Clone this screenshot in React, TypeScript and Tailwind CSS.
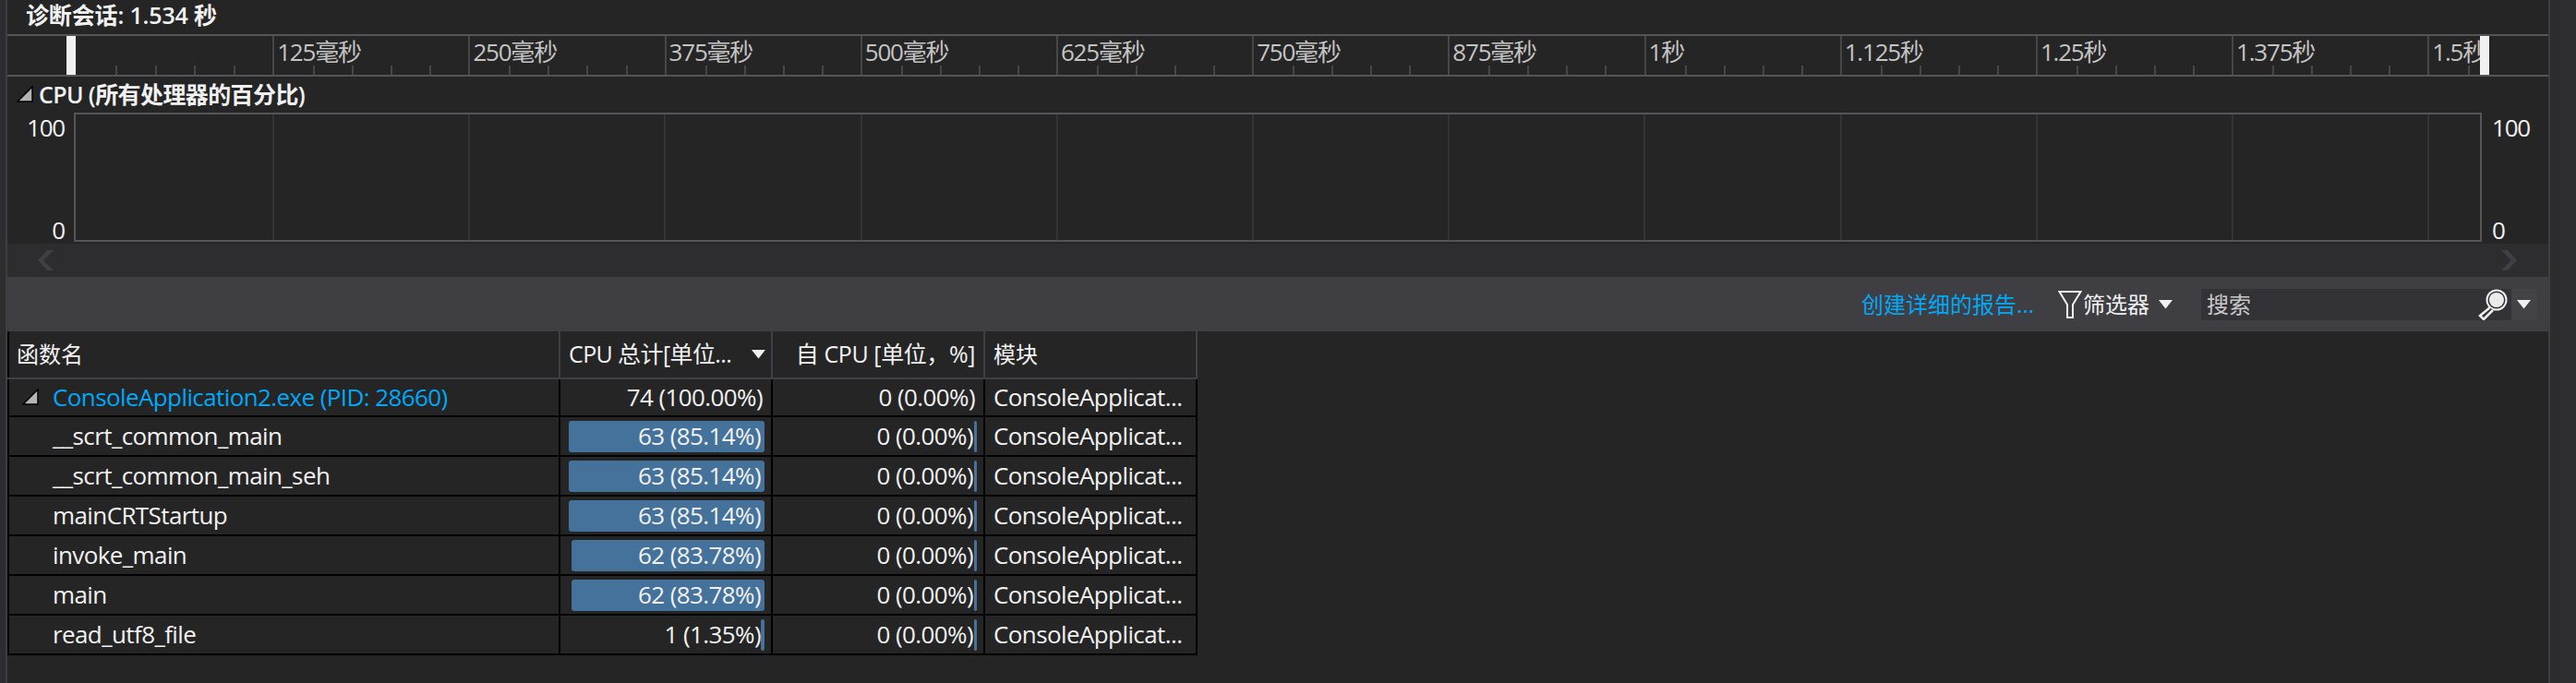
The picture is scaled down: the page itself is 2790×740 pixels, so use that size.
const font = '"Open Sans","Noto Sans CJK SC",sans-serif';

const labels = ['', '125毫秒', '250毫秒', '375毫秒', '500毫秒', '625毫秒', '750毫秒', '875毫秒', '1秒', '1.125秒', '1.25秒', '1.375秒', '1.5秒'];

function Tri({ className = '' }: { className?: string }) {
  return (
    <svg width="19" height="19" viewBox="0 0 19 19" className={className}>
      <polygon points="17,1 17,17 1,17" fill="#b4b4b4" stroke="#000" strokeWidth="1.5" />
    </svg>
  );
}

function Caret({ className = '' }: { className?: string }) {
  return (
    <svg width="15" height="10" viewBox="0 0 15 10" className={className}>
      <polygon points="0,0 15,0 7.5,9.5" fill="#f1f1f1" />
    </svg>
  );
}

function Ruler() {
  return (
    <div className="relative h-[46px] overflow-hidden border-y-2 border-[#555557]">
      <div className="flex h-full w-[2678px] overflow-hidden pl-[75px]">
        {labels.map((l, i) => (
          <div key={i} className={`relative flex h-full w-[212.2px] shrink-0 flex-col justify-between ${i > 0 ? 'border-l-2 border-[#47474a]' : ''}`}>
            <div className="h-[30px] pl-[3px] text-[26px] leading-[34px] tracking-[-1.2px] whitespace-nowrap text-[#c4c4c4]">{l}</div>
            <div className="grid h-[10px] grid-cols-5">
              <div />
              <div className="border-l-2 border-[#47474a]" />
              <div className="border-l-2 border-[#47474a]" />
              <div className="border-l-2 border-[#47474a]" />
              <div className="border-l-2 border-[#47474a]" />
            </div>
          </div>
        ))}
      </div>
      <div className="absolute top-0 bottom-0 left-[64px] w-[10px] bg-[#f1f1f1]" />
      <div className="absolute top-0 bottom-0 left-[2678px] w-[10px] bg-[#f1f1f1]" />
    </div>
  );
}

function Chart() {
  const lines = labels.slice(1);
  return (
    <div className="flex h-[140px]">
      <div className="flex w-[72px] shrink-0 flex-col justify-between pr-[10px] text-right text-[26px] leading-[32px] tracking-[-1.2px] text-[#f1f1f1]">
        <div>100</div>
        <div className="mb-[-3px]">0</div>
      </div>
      <div className="flex h-full w-[2608px] shrink-0 overflow-hidden border-2 border-[#555557] pl-[213px]">
        {lines.map((_, i) => (
          <div key={i} className="h-full w-[212.2px] shrink-0 border-l-2 border-[#333336]" />
        ))}
      </div>
      <div className="flex flex-col justify-between pl-[11px] text-[26px] leading-[32px] tracking-[-1.2px] text-[#f1f1f1]">
        <div>100</div>
        <div className="mb-[-3px]">0</div>
      </div>
    </div>
  );
}

type Row = { name: string; total: string; bar: number };
const rows: Row[] = [
  { name: '__scrt_common_main', total: '63 (85.14%)', bar: 212 },
  { name: '__scrt_common_main_seh', total: '63 (85.14%)', bar: 212 },
  { name: 'mainCRTStartup', total: '63 (85.14%)', bar: 212 },
  { name: 'invoke_main', total: '62 (83.78%)', bar: 209 },
  { name: 'main', total: '62 (83.78%)', bar: 209 },
  { name: 'read_utf8_file', total: '1 (1.35%)', bar: 4 },
];

function Num({ value, bar, pr }: { value: string; bar: number; pr: string }) {
  return (
    <div className={`relative flex h-full items-center justify-end ${pr}`}>
      {bar > 0 && (
        <div className="absolute top-[4px] right-[7px] bottom-[3px] rounded-[3px] bg-[#44729a]" style={{ width: bar }} />
      )}
      <span className="relative">{value}</span>
    </div>
  );
}

function Cells({ name, total, self, bar, selfBar, blue, expander }: { name: string; total: string; self: string; bar: number; selfBar: boolean; blue?: boolean; expander?: boolean }) {
  return (
    <div className={`flex w-[1289px] border-b-2 border-black text-[26px] tracking-[-0.6px] text-[#f1f1f1] ${expander ? 'h-[41px]' : 'h-[43px]'}`}>
      <div className={`flex w-[599px] items-center border-x-2 border-black pl-[14px] ${blue ? 'text-[#00a8f8]' : ''}`}>
        <div className="w-[33px] shrink-0">{expander && <Tri />}</div>
        <span className="whitespace-nowrap">{name}</span>
      </div>
      <div className="w-[230px] border-r-2 border-black">
        <Num value={total} bar={bar} pr={bar ? 'pr-[11px]' : 'pr-[9px]'} />
      </div>
      <div className="w-[230px] border-r-2 border-black">
        <Num value={self} bar={selfBar ? 3 : 0} pr={selfBar ? 'pr-[11px]' : 'pr-[9px]'} />
      </div>
      <div className="flex w-[230px] items-center border-r-2 border-black pl-[9px] whitespace-nowrap">
        <span>ConsoleApplicat...</span>
      </div>
    </div>
  );
}

export default function App() {
  return (
    <div className="flex h-[740px] w-[2790px] overflow-hidden bg-[#2d2d30]" style={{ fontFamily: font }}>
      <div className="w-[8px] shrink-0 border-r-2 border-[#3e3e42] bg-[#2d2d30]" />
      <div className="flex w-[2752px] shrink-0 flex-col bg-[#252526]">
        <div className="h-[37px] pl-[20px] text-[25px] leading-[32px] font-semibold tracking-[-0.15px] text-[#f1f1f1]">诊断会话: 1.534 秒</div>
        <Ruler />
        <div className="flex h-[39px] items-center gap-[5px] pl-[10px] text-[25px] font-semibold tracking-[-0.6px] text-[#f1f1f1]">
          <Tri />
          <span>CPU (所有处理器的百分比)</span>
        </div>
        <Chart />
        <div className="h-[2px]" />
        <div className="flex h-[36px] items-center justify-between bg-[#2d2d30] pr-[34px] pl-[33px]">
          <svg width="20" height="24" viewBox="0 0 20 24"><path d="M17 1 L6 12 L17 23 H10 L0 12 L10 1 Z" fill="#3f3f46" /></svg>
          <svg width="20" height="24" viewBox="0 0 20 24"><path d="M3 1 L14 12 L3 23 H10 L20 12 L10 1 Z" fill="#3f3f46" /></svg>
        </div>
        <div className="flex h-[59px] items-center justify-end bg-[#3f3f43] pr-[12px] text-[24px] text-[#f1f1f1]">
          <span className="text-[#00a8f8]">创建详细的报告...</span>
          <svg width="26" height="34" viewBox="0 0 26 34" className="ml-[26px]">
            <path d="M1.5 3 H24.5 L16 17 V31 H10 V17 Z" fill="none" stroke="#f1f1f1" strokeWidth="2" />
          </svg>
          <span className="ml-[1px]">筛选器</span>
          <Caret className="ml-[10px]" />
          <div className="ml-[31px] flex h-[34px] w-[336px] items-center justify-between bg-[#333337] pr-[4px] pl-[6px] text-[#c8c8c8]">
            <span>搜索</span>
            <svg width="32" height="34" viewBox="0 0 32 34">
              <circle cx="20" cy="12" r="10.5" fill="#333337" stroke="#f1f1f1" strokeWidth="2" />
              <circle cx="20" cy="12" r="8" fill="#ececec" />
              <path d="M13 20 L2 29 L6 33 L16 23" fill="#333337" stroke="#f1f1f1" strokeWidth="2.5" />
            </svg>
          </div>
          <div className="flex h-[34px] w-[28px] items-center bg-[#434347] pl-[6px]">
            <Caret />
          </div>
        </div>

        <div className="flex h-[52px] w-[1289px] border-b-2 border-[#3f3f46] text-[25px] text-[#f1f1f1]">
          <div className="flex w-[599px] items-center border-r-2 border-l-2 border-r-[#3f3f46] border-l-black pl-[8px] text-[24px]">函数名</div>
          <div className="flex w-[230px] items-center justify-between border-r-2 border-[#3f3f46] pr-[6px] pl-[9px]">
            <span className="tracking-[-0.6px] whitespace-nowrap">CPU 总计[单位...</span>
            <Caret />
          </div>
          <div className="flex w-[230px] items-center justify-end border-r-2 border-[#3f3f46] pr-[9px] tracking-[-0.4px] whitespace-nowrap">自 CPU [单位，%]</div>
          <div className="flex w-[230px] items-center border-r-2 border-[#3f3f46] pl-[9px] text-[24px]">模块</div>
        </div>
        <Cells name="ConsoleApplication2.exe (PID: 28660)" total="74 (100.00%)" self="0 (0.00%)" bar={0} selfBar={false} blue expander />
        {rows.map((r) => (
          <Cells key={r.name} name={r.name} total={r.total} self="0 (0.00%)" bar={r.bar} selfBar />
        ))}
      </div>
      <div className="flex-1 border-l-2 border-[#3e3e42] bg-[#2d2d30]" />
    </div>
  );
}
